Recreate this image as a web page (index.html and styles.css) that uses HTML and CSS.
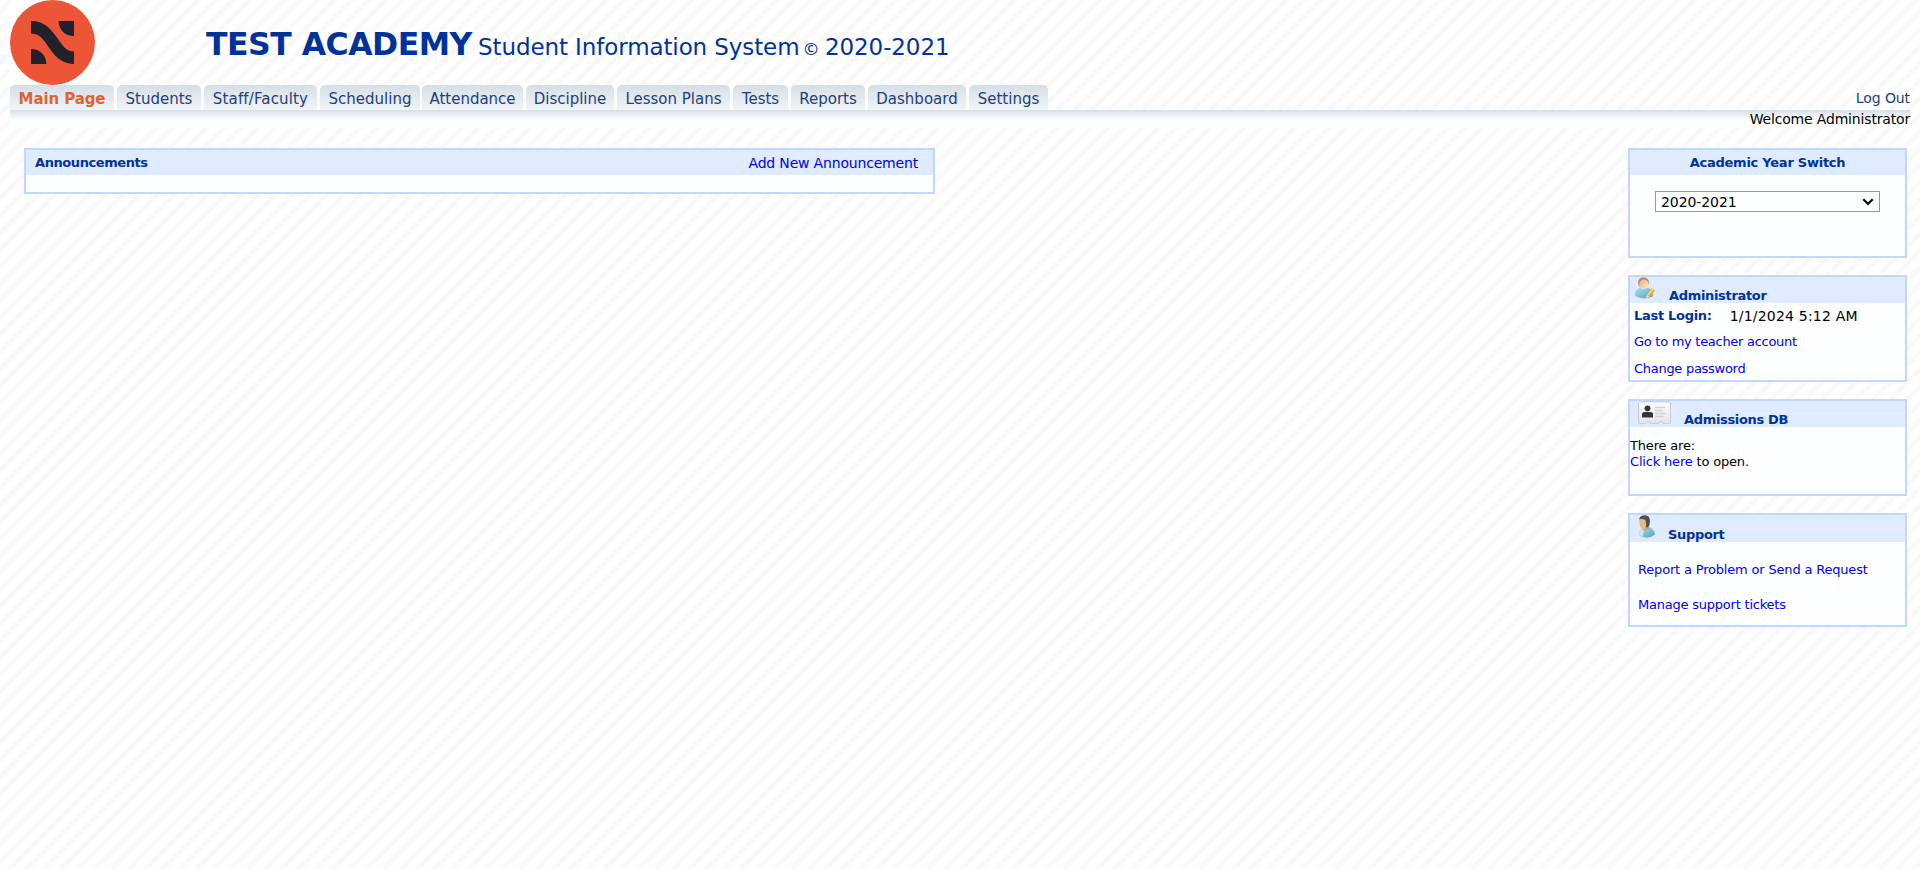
FILE: index.html
```html
<!DOCTYPE html>
<html lang="en">
<head>
<meta charset="utf-8">
<title>Test Academy - Student Information System</title>
<link rel="stylesheet" href="styles.css">
</head>
<body>
<header class="header">
  <svg class="logo" viewBox="0 0 85 85" width="85" height="85"><path fill="#fff" d="M0 0h85v85H0z"/><circle cx="42.500" cy="42.500" r="42.500" fill="#ec5535"/><path fill="#20212a" d="M21 21C34 21 40 28 46.500 37S56 51.500 64 51.500V64C51 64 44 55 38.500 47S30 33.500 21 33.500ZM48.500 21H64V36C55 36 49 30 48.500 21ZM21 49C30 49 36 55 36.500 64H21Z"/></svg>
  <h1 class="title"><span class="school">TEST ACADEMY</span><span class="system">Student Information System</span><span class="copy">©</span><span class="years">2020-2021</span></h1>
</header>
<nav class="nav">
  <a class="tab tab-main">Main Page</a>
  <a class="tab tab-students">Students</a>
  <a class="tab tab-staff">Staff/Faculty</a>
  <a class="tab tab-scheduling">Scheduling</a>
  <a class="tab tab-attendance">Attendance</a>
  <a class="tab tab-discipline">Discipline</a>
  <a class="tab tab-lessons">Lesson Plans</a>
  <a class="tab tab-tests">Tests</a>
  <a class="tab tab-reports">Reports</a>
  <a class="tab tab-dashboard">Dashboard</a>
  <a class="tab tab-settings">Settings</a>
  <a class="logout">Log Out</a>
</nav>
<div class="shade"><span class="welcome">Welcome Administrator</span></div>
<main class="main">
  <section class="panel announcements">
    <div class="panel-head"><b>Announcements</b><a class="add">Add New Announcement</a></div>
  </section>
  <aside class="side">
    <section class="panel year">
      <div class="panel-head centered"><b>Academic Year Switch</b></div>
      <div class="select"><span>2020-2021</span><svg width="12" height="8" viewBox="0 0 12 8"><path d="M1.300 1.200 6 5.900l4.700-4.700" fill="none" stroke="#111" stroke-width="2.200"/></svg></div>
    </section>
    <section class="panel admin">
      <div class="panel-head icon-head">
        <svg width="21" height="24" viewBox="0 0 21 24"><defs><linearGradient id="blue" x2="1" y2="1"><stop stop-color="#b5e2ef"/><stop offset="1" stop-color="#4ba3c7"/></linearGradient><linearGradient id="skin" x2="1" y2="1"><stop stop-color="#e5b48c"/><stop offset="1" stop-color="#fbe6cc"/></linearGradient></defs><ellipse cx="9" cy="21.500" rx="9" ry="1.800" fill="#e9edf2"/><path d="M0 19C-.5 13 3 11 5 10.500q4 3 7 0c4 1 7 4 5.500 9q-9 4-17.500-.5Z" fill="url(#blue)"/><circle cx="8.500" cy="5.700" r="5.500" fill="#bd8866"/><ellipse cx="9" cy="7.300" rx="4.700" ry="4.700" fill="url(#skin)"/><path d="m11 21 1.500-4.500L17 11l3 2.500-5 6Z" fill="#efaf37"/><path d="m13 17.500 5-5.500" stroke="#ffe079" stroke-width="1.300"/><path d="m11 21 1-3 2.500 2Z" fill="#f5dfc0"/></svg>
        <b>Administrator</b>
      </div>
      <div class="login"><b>Last Login:</b><span>1/1/2024 5:12 AM</span></div>
      <a class="row-teacher">Go to my teacher account</a>
      <a class="row-password">Change password</a>
    </section>
    <section class="panel admissions">
      <div class="panel-head icon-head">
        <svg width="33" height="24" viewBox="0 0 33 24"><defs><linearGradient id="card" x2="0" y2="1"><stop stop-color="#fdfdfd"/><stop offset="1" stop-color="#e3e4e8"/></linearGradient></defs><path d="M1.500.8h30l1 1V21l-1 1.700h-6q0-2-2.500-2t-2.500 2h-8q0-2-2.500-2t-2.500 2h-6L.5 21V1.800Z" fill="url(#card)" stroke="#c6c7cc"/><circle cx="9.500" cy="7.300" r="2.900" fill="#333439"/><path d="M4 16.500V13q0-2 3-2h5q3 0 3 2v3.500Z" fill="#333439"/><path d="M17 6.500h10M17 9.500h8M17 12.500h11M17 15.500h9" stroke="#d3d4d8" stroke-width="1.700"/></svg>
        <b>Admissions DB</b>
      </div>
      <p class="summary">There are:<br><a>Click here</a> to open.</p>
    </section>
    <section class="panel support">
      <div class="panel-head icon-head">
        <svg width="18" height="24" viewBox="0 0 18 24"><ellipse cx="9" cy="21.500" rx="8" ry="1.800" fill="#dfe9e9"/><path d="M1 20q0-6 4-7l5-1.500q6 2 7 8-8 6-16 .5Z" fill="url(#blue)"/><path d="m4 10 6-1 1 4.500-5 2Z" fill="#d89a69"/><path d="M1.200 4Q2 .3 7 .3q5 0 5 6 0 4-2 6H6Z" fill="#505052"/><path d="M1.300 4q4-.5 6 1l.8 3q.5 5.500-2.500 6.300Q1 14 1.300 4Z" fill="#edb883"/><path d="m2.500 14 3 1.500-1 6-3.500-2Z" fill="#cdeaf0"/></svg>
        <b>Support</b>
      </div>
      <a class="row-report">Report a Problem or Send a Request</a>
      <a class="row-tickets">Manage support tickets</a>
    </section>
  </aside>
</main>
</body>
</html>
```
FILE: styles.css
```css
* { box-sizing: border-box; }
body {
  margin: 0;
  padding: 0 10px;
  min-height: 869px;
  font: 13px/16px Verdana, "DejaVu Sans", sans-serif;
  color: #000;
  background: repeating-linear-gradient(135deg, #fff 0, #fff 4.500px, #f8f8f8 7.500px, #f8f8f8 9px, #fff 12.020px);
}
a { color: #00e; white-space: nowrap; }
b { color: #039; white-space: nowrap; letter-spacing: -0.25px; }
svg { display: block; flex: none; }
.header { display: flex; height: 85px; }
.title { display: flex; align-items: baseline; margin: 0; padding: 25px 0 0 111px; font-weight: 400; font-size: 24px; line-height: 38px; color: #039; white-space: nowrap; }
.school { width: 272px; font-weight: 700; font-size: 31.500px; letter-spacing: -0.5px; }
.system { width: 326px; font-size: 23px; letter-spacing: -0.1px; }
.copy { width: 21px; padding-top: 3px; font-family: "Noto Sans", sans-serif; font-size: 17px; line-height: 20px; }
.years { font-size: 23px; letter-spacing: -0.1px; }
.nav { display: flex; height: 25px; color: #1e3c7b; }
.tab {
  height: 25px;
  margin-right: 3px;
  border-radius: 5px 5px 0 0;
  background: linear-gradient(#d6dfe6, #f0f4f8);
  font-size: 15px;
  line-height: 28px;
  text-align: center;
  color: #233e7c;
}
.tab-main { width: 104px; font-weight: 700; color: #dd6431; letter-spacing: -0.1px; }
.tab-students { width: 84px; }
.tab-staff { width: 113px; letter-spacing: 0.15px; }
.tab-scheduling { width: 100px; margin-right: 2px; }
.tab-attendance { width: 101px; }
.tab-discipline { width: 88px; }
.tab-lessons { width: 113px; }
.tab-tests { width: 55px; }
.tab-reports { width: 74px; }
.tab-dashboard { width: 98px; }
.tab-settings { width: 79px; }
.logout { margin-left: auto; font-size: 14px; line-height: 26px; letter-spacing: -0.1px; color: #233e7c; }
.shade { display: flex; justify-content: flex-end; height: 18px; background: linear-gradient(#d5dfe5, #fdfefe 9px, #fff); }
.welcome { font-size: 14px; line-height: 18px; white-space: nowrap; letter-spacing: -0.17px; }
.main { display: flex; justify-content: space-between; align-items: flex-start; padding: 20px 3px 0 14px; }
.panel { display: flex; flex-direction: column; border: 2px solid #c1d7ff; background: #fdfeff; }
.panel-head { display: flex; justify-content: space-between; height: 25px; flex: none; padding: 0 15px 0 9px; background: #dfebff; line-height: 25px; }
.panel-head.centered { justify-content: center; }
.panel-head.centered { padding: 0; }
.announcements { width: 911px; height: 46px; }
.announcements b { letter-spacing: -0.42px; }
.add { font-size: 14px; line-height: 26px; letter-spacing: -0.18px; }
.side { display: flex; flex-direction: column; width: 279px; }
.year { height: 110px; margin-bottom: 17px; }
.select { display: flex; align-items: center; justify-content: space-between; width: 225px; height: 21px; margin: 16px 0 0 25px; padding: 0 5px; border: 1px solid #7f9db9; font-size: 14px; }
.select span { letter-spacing: -0.08px; }
.icon-head { justify-content: flex-start; align-items: flex-start; height: 26px; padding: 0 0 0 5px; line-height: 37px; }
.admin { height: 107px; margin-bottom: 17px; }
.admin .icon-head b { margin-left: 13px; letter-spacing: -0.33px; }
.login { display: flex; gap: 18px; padding: 4px 0 0 4px; font-size: 14px; line-height: 18px; letter-spacing: 0.2px; }
.login b { font-size: 13px; line-height: 17px; letter-spacing: -0.3px; }
.row-teacher { margin: 9px 0 0 4px; letter-spacing: -0.28px; }
.row-password { margin: 11px 0 0 4px; letter-spacing: -0.28px; }
.admissions { height: 97px; margin-bottom: 17px; }
.admissions .icon-head { padding-left: 8px; }
.admissions .icon-head b { margin-left: 13px; letter-spacing: -0.33px; }
.summary { margin: 11px 0 0; letter-spacing: -0.18px; }
.support { height: 114px; }
.support .icon-head { height: 27px; padding-left: 8px; line-height: 39px; }
.support .icon-head b { margin-left: 12px; letter-spacing: -0.33px; }
.row-report { margin: 20px 0 0 8px; letter-spacing: -0.18px; }
.row-tickets { margin: 19px 0 0 8px; letter-spacing: -0.22px; }
```
